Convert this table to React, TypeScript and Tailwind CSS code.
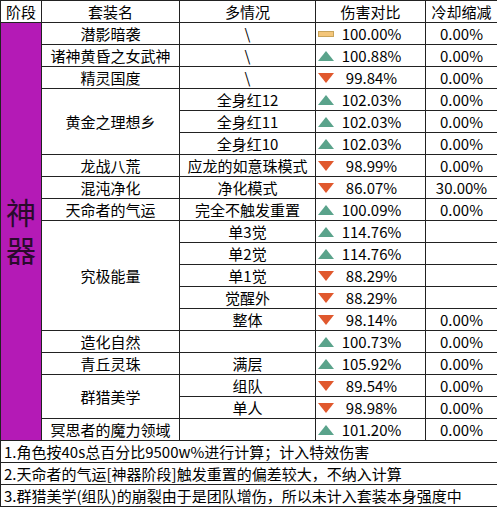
import React from 'react';

type Trend = 'flat' | 'up' | 'down';

type Row = {
  name?: string;
  span?: number;
  variant: string;
  trend: Trend;
  dmg: string;
  cd: string;
};

const rows: Row[] = [
  { name: '潜影暗袭', variant: '\\', trend: 'flat', dmg: '100.00%', cd: '0.00%' },
  { name: '诸神黄昏之女武神', variant: '\\', trend: 'up', dmg: '100.88%', cd: '0.00%' },
  { name: '精灵国度', variant: '\\', trend: 'down', dmg: '99.84%', cd: '0.00%' },
  { name: '黄金之理想乡', span: 3, variant: '全身红12', trend: 'up', dmg: '102.03%', cd: '0.00%' },
  { variant: '全身红11', trend: 'up', dmg: '102.03%', cd: '0.00%' },
  { variant: '全身红10', trend: 'up', dmg: '102.03%', cd: '0.00%' },
  { name: '龙战八荒', variant: '应龙的如意珠模式', trend: 'down', dmg: '98.99%', cd: '0.00%' },
  { name: '混沌净化', variant: '净化模式', trend: 'down', dmg: '86.07%', cd: '30.00%' },
  { name: '天命者的气运', variant: '完全不触发重置', trend: 'up', dmg: '100.09%', cd: '0.00%' },
  { name: '究极能量', span: 5, variant: '单3觉', trend: 'up', dmg: '114.76%', cd: '' },
  { variant: '单2觉', trend: 'up', dmg: '114.76%', cd: '' },
  { variant: '单1觉', trend: 'down', dmg: '88.29%', cd: '' },
  { variant: '觉醒外', trend: 'down', dmg: '88.29%', cd: '' },
  { variant: '整体', trend: 'down', dmg: '98.14%', cd: '0.00%' },
  { name: '造化自然', variant: '', trend: 'up', dmg: '100.73%', cd: '0.00%' },
  { name: '青丘灵珠', variant: '满层', trend: 'up', dmg: '105.92%', cd: '0.00%' },
  { name: '群猎美学', span: 2, variant: '组队', trend: 'down', dmg: '89.54%', cd: '0.00%' },
  { variant: '单人', trend: 'down', dmg: '98.98%', cd: '0.00%' },
  { name: '冥思者的魔力领域', variant: '', trend: 'up', dmg: '101.20%', cd: '0.00%' },
];

const notes = [
  '1.角色按40s总百分比9500w%进行计算；计入特效伤害',
  '2.天命者的气运[神器阶段]触发重置的偏差较大，不纳入计算',
  '3.群猎美学(组队)的崩裂由于是团队增伤，所以未计入套装本身强度中',
];

const spanClass: Record<number, string> = {
  1: '',
  2: 'row-span-2',
  3: 'row-span-3',
  5: 'row-span-5',
};

const cell = 'border-r border-b border-[#222] flex items-center justify-center whitespace-nowrap';

const TrendIcon = ({ trend }: { trend: Trend }) => {
  if (trend === 'flat') {
    return (
      <svg width="16" height="10" viewBox="0 0 16 10">
        <rect x="0.5" y="2.5" width="15" height="5" fill="#f4c67a" stroke="#c9a45a" />
      </svg>
    );
  }
  if (trend === 'up') {
    return (
      <svg width="16" height="10" viewBox="0 0 16 10">
        <polygon points="8,0 16,10 0,10" fill="#5aa38b" />
      </svg>
    );
  }
  return (
    <svg width="16" height="10" viewBox="0 0 16 10">
      <polygon points="0,0 16,0 8,10" fill="#e0582d" />
    </svg>
  );
};

export default function App() {
  return (
    <div
      className="w-[497px] h-[507px] bg-white text-[#000] overflow-hidden"
      style={{ fontFamily: '"Noto Sans CJK SC", "Microsoft YaHei", sans-serif' }}
    >
      <div className="grid grid-cols-[41px_138px_136px_110px_72px] auto-rows-[22px] border-t border-l border-[#222] text-[15px] leading-none">
        <div className={cell}>阶段</div>
        <div className={cell}>套装名</div>
        <div className={cell}>多情况</div>
        <div className={cell}>伤害对比</div>
        <div className={cell}>冷却缩减</div>

        <div className={`${cell} row-span-19 bg-[#b41ab6]`}>
          <span className="[writing-mode:vertical-rl] text-[30px] leading-[34px] tracking-[8px] pt-[8px] text-[#2a0a2c]">
            神器
          </span>
        </div>

        {rows.map((r, i) => (
          <React.Fragment key={i}>
            {r.name !== undefined && (
              <div className={`${cell} ${spanClass[r.span ?? 1]}`}>{r.name}</div>
            )}
            <div className={cell}>{r.variant}</div>
            <div className={`${cell} relative`}>
              <span className="absolute left-[2px] top-[6px] flex">
                <TrendIcon trend={r.trend} />
              </span>
              <span className="pl-[2px]">{r.dmg}</span>
            </div>
            <div className={cell}>{r.cd}</div>
          </React.Fragment>
        ))}

        {notes.map((n) => (
          <div
            key={n}
            className="col-span-5 border-r border-b border-[#222] flex items-center pl-[3px] text-[15px] whitespace-nowrap"
          >
            {n}
          </div>
        ))}
      </div>
    </div>
  );
}
